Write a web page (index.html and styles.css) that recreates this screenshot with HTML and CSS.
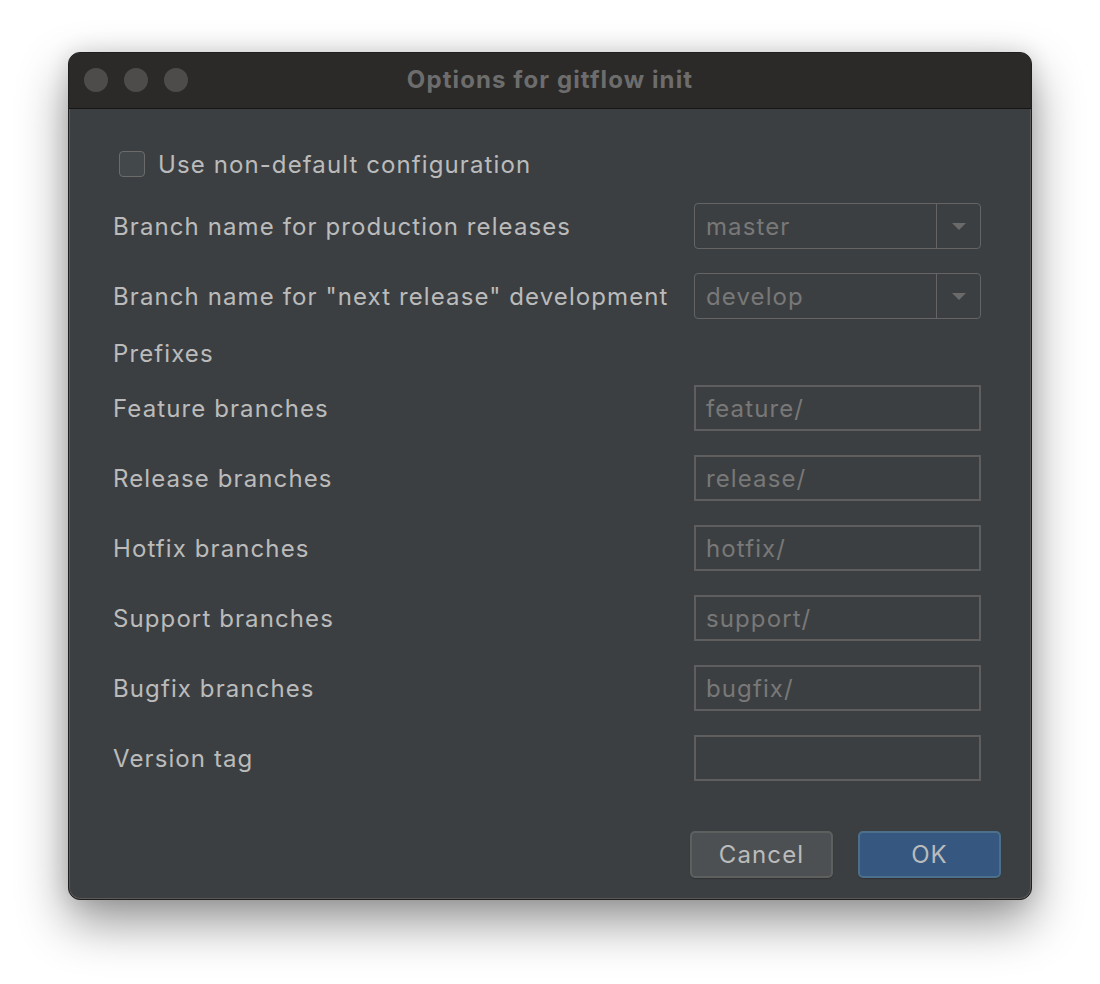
FILE: index.html
```html
<!DOCTYPE html>
<html>
<head>
<meta charset="utf-8">
<link rel="stylesheet" href="styles.css">
</head>
<body>
<div class="window">
  <div class="titlebar">
    <div class="lights"><span class="light"></span><span class="light"></span><span class="light"></span></div>
    <div class="title">Options for gitflow init</div>
  </div>
  <div class="content">
    <div class="row row-check">
      <label class="check"><span class="box"></span><span class="label">Use non-default configuration</span></label>
    </div>
    <div class="row row-combo1">
      <span class="label">Branch name for production releases</span>
      <div class="combo"><span class="value">master</span><span class="arrow"><svg width="16" height="9" viewBox="0 0 16 9"><path d="M1 1h14L8 8z" fill="#6a6a6a"/></svg></span></div>
    </div>
    <div class="row row-combo2">
      <span class="label">Branch name for "next release" development</span>
      <div class="combo"><span class="value">develop</span><span class="arrow"><svg width="16" height="9" viewBox="0 0 16 9"><path d="M1 1h14L8 8z" fill="#6a6a6a"/></svg></span></div>
    </div>
    <div class="row row-section">
      <span class="label">Prefixes</span>
    </div>
    <div class="row row-first">
      <span class="label">Feature branches</span>
      <div class="field">feature/</div>
    </div>
    <div class="row">
      <span class="label">Release branches</span>
      <div class="field">release/</div>
    </div>
    <div class="row">
      <span class="label">Hotfix branches</span>
      <div class="field">hotfix/</div>
    </div>
    <div class="row">
      <span class="label">Support branches</span>
      <div class="field">support/</div>
    </div>
    <div class="row">
      <span class="label">Bugfix branches</span>
      <div class="field">bugfix/</div>
    </div>
    <div class="row">
      <span class="label">Version tag</span>
      <div class="field"></div>
    </div>
    <div class="buttons">
      <button class="btn btn-cancel">Cancel</button>
      <button class="btn btn-ok">OK</button>
    </div>
  </div>
</div>
</body>
</html>
```

FILE: styles.css
```css
html, body {
  margin: 0;
  padding: 0;
}
body {
  background: #ffffff;
  width: 1100px;
  height: 984px;
  overflow: hidden;
  font-family: Inter, "Noto Sans", sans-serif;
}
.window {
  margin: 52px 0 0 68px;
  width: 964px;
  height: 848px;
  box-sizing: border-box;
  background: #3c3f41;
  border-radius: 12px;
  border: 1px solid #1f1f1f;
  box-shadow: 0 0 0 1px #5a5a5a inset, 0 22px 50px rgba(0,0,0,0.42), 0 0 22px rgba(0,0,0,0.12);
  overflow: hidden;
  display: flex;
  flex-direction: column;
}
.titlebar {
  height: 55px;
  flex: none;
  background: #2b2a28;
  border-bottom: 1px solid #151515;
  position: relative;
  display: flex;
  align-items: center;
  justify-content: center;
}
.lights {
  position: absolute;
  left: 15px;
  top: 15px;
  display: flex;
  gap: 16px;
}
.light {
  width: 24px;
  height: 24px;
  border-radius: 50%;
  background: #4d4c4a;
}
.title {
  color: #6d6d6d;
  font-weight: 700;
  font-size: 24px;
  letter-spacing: 1.1px;
  margin-top: -2px;
}
.content {
  flex: 1;
  padding: 32px 50px 0 44px;
  display: flex;
  flex-direction: column;
  color: #bbbbbb;
  font-size: 24px;
  letter-spacing: 1.1px;
}
.row {
  height: 46px;
  display: flex;
  align-items: center;
  justify-content: space-between;
  margin-top: 24px;
}
.row-check { margin-top: 0; }
.row-combo1 { margin-top: 16px; }
.row-combo2 { margin-top: 24px; }
.row-section { margin-top: 11px; }
.row-first { margin-top: 9px; }
.label {
  color: #bbbbbb;
  white-space: nowrap;
}
.check {
  display: flex;
  align-items: center;
  gap: 13px;
  margin-left: 6px;
}
.box {
  width: 24px;
  height: 24px;
  border: 1px solid #6b6b6b;
  border-radius: 4px;
  background: #43494a;
}
.combo {
  width: 287px;
  height: 46px;
  box-sizing: border-box;
  border: 1px solid #646464;
  border-radius: 4px;
  display: flex;
  align-items: stretch;
}
.combo .value {
  flex: 1;
  display: flex;
  align-items: center;
  padding-left: 11px;
  color: #787878;
}
.combo .arrow {
  width: 43px;
  border-left: 1px solid #646464;
  display: flex;
  align-items: center;
  justify-content: center;
}
.field {
  width: 287px;
  height: 46px;
  box-sizing: border-box;
  border: 2px solid #5e5e5e;
  display: flex;
  align-items: center;
  padding-left: 10px;
  color: #787878;
}
.buttons {
  display: flex;
  justify-content: flex-end;
  gap: 25px;
  margin-top: 50px;
  margin-right: -20px;
}
.btn {
  width: 143px;
  height: 47px;
  border-radius: 5px;
  font-family: Inter, "Noto Sans", sans-serif;
  font-size: 24px;
  letter-spacing: 1.1px;
  color: #bbbbbb;
  box-shadow: 0 1px 1px rgba(0,0,0,0.2);
}
.btn-cancel {
  background: #4c5052;
  border: 2px solid #5e6060;
}
.btn-ok {
  background: #365880;
  border: 2px solid #4c708c;
}
```
